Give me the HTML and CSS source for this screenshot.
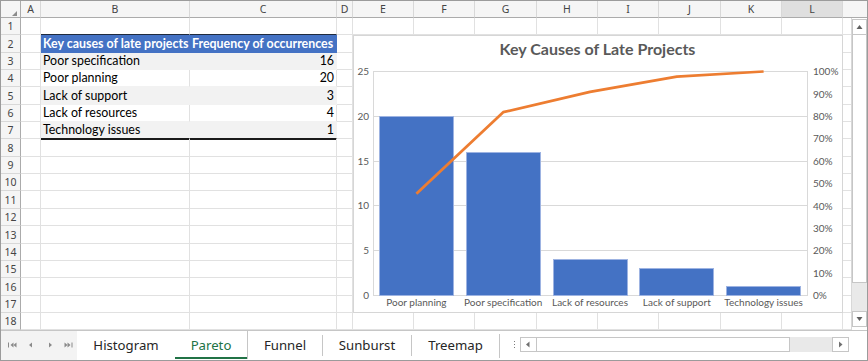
FILE: index.html
```html
<!DOCTYPE html>
<html>
<head>
<meta charset="utf-8">
<link rel="stylesheet" href="styles.css">
</head>
<body>
<div class="app">
  <div class="main">
    <div class="grid">
      <div class="chart">
        <svg width="488" height="276" viewBox="0 0 488 276">
          <text class="title" x="243.5" y="18.5" text-anchor="middle">Key Causes of Late Projects</text>
          <g stroke="#d9d9d9" stroke-width="1" fill="none">
            <line x1="19" y1="80.5" x2="454" y2="80.5"/>
            <line x1="19" y1="125.5" x2="454" y2="125.5"/>
            <line x1="19" y1="169.5" x2="454" y2="169.5"/>
            <line x1="19" y1="214.5" x2="454" y2="214.5"/>
            <rect x="19.5" y="35.5" width="434" height="224"/>
          </g>
          <g fill="#4472c4" stroke="#9db3e2" stroke-width="1">
            <rect x="25.5" y="80.5" width="74" height="179"/>
            <rect x="112.5" y="116.5" width="74" height="143"/>
            <rect x="199.5" y="223.5" width="74" height="36"/>
            <rect x="285.5" y="232.5" width="74" height="27"/>
            <rect x="372.5" y="250.5" width="74" height="9"/>
          </g>
          <polyline points="62.4,157.7 149.2,76.2 236,55.9 322.8,40.6 409.6,35.5" fill="none" stroke="#ed7d31" stroke-width="2.75" stroke-linejoin="round"/>
          <g class="ax" text-anchor="end">
            <text x="15" y="263">0</text>
            <text x="15" y="218">5</text>
            <text x="15" y="173">10</text>
            <text x="15" y="129">15</text>
            <text x="15" y="84">20</text>
            <text x="15" y="39">25</text>
          </g>
          <g class="ax" text-anchor="start">
            <text x="459" y="263.1">0%</text>
            <text x="459" y="240.7">10%</text>
            <text x="459" y="218.3">20%</text>
            <text x="459" y="195.9">30%</text>
            <text x="459" y="173.5">40%</text>
            <text x="459" y="151.1">50%</text>
            <text x="459" y="128.7">60%</text>
            <text x="459" y="106.3">70%</text>
            <text x="459" y="83.9">80%</text>
            <text x="459" y="61.5">90%</text>
            <text x="459" y="39.1">100%</text>
          </g>
          <g class="ax" text-anchor="middle">
            <text x="62.4" y="269.5">Poor planning</text>
            <text x="149.2" y="269.5">Poor specification</text>
            <text x="236" y="269.5">Lack of resources</text>
            <text x="322.8" y="269.5">Lack of support</text>
            <text x="409.6" y="269.5">Technology issues</text>
          </g>
        </svg>
      </div>

      <div class="corner"><svg width="19" height="16" viewBox="0 0 19 16"><polygon points="16,10 16,15 11,15" fill="#8c8c8c"/></svg></div>
      <div class="ch">A</div><div class="ch">B</div><div class="ch">C</div><div class="ch">D</div><div class="ch">E</div><div class="ch">F</div><div class="ch">G</div><div class="ch">H</div><div class="ch">I</div><div class="ch">J</div><div class="ch">K</div><div class="ch hl">L</div><div class="ch last"></div>

      <div class="rh">1</div><div class="c"></div><div class="c top"></div><div class="c top"></div><div class="c"></div><div class="c"></div><div class="c"></div><div class="c"></div><div class="c"></div><div class="c"></div><div class="c"></div><div class="c"></div><div class="c"></div><div class="c m"></div>

      <div class="rh">2</div><div class="c"></div><div class="c th">Key causes of late projects</div><div class="c th">Frequency of occurrences</div><div class="c"></div><div class="c m"></div>
      <div class="rh">3</div><div class="c"></div><div class="c band">Poor specification</div><div class="c band num">16</div><div class="c"></div><div class="c m"></div>
      <div class="rh">4</div><div class="c"></div><div class="c plain">Poor planning</div><div class="c plain num">20</div><div class="c"></div><div class="c m"></div>
      <div class="rh">5</div><div class="c"></div><div class="c band">Lack of support</div><div class="c band num">3</div><div class="c"></div><div class="c m"></div>
      <div class="rh">6</div><div class="c"></div><div class="c plain">Lack of resources</div><div class="c plain num">4</div><div class="c"></div><div class="c m"></div>
      <div class="rh">7</div><div class="c"></div><div class="c band lastrow">Technology issues</div><div class="c band num lastrow">1</div><div class="c"></div><div class="c m"></div>
      <div class="rh">8</div><div class="c"></div><div class="c"></div><div class="c"></div><div class="c"></div><div class="c m"></div>
      <div class="rh">9</div><div class="c"></div><div class="c"></div><div class="c"></div><div class="c"></div><div class="c m"></div>
      <div class="rh">10</div><div class="c"></div><div class="c"></div><div class="c"></div><div class="c"></div><div class="c m"></div>
      <div class="rh">11</div><div class="c"></div><div class="c"></div><div class="c"></div><div class="c"></div><div class="c m"></div>
      <div class="rh">12</div><div class="c"></div><div class="c"></div><div class="c"></div><div class="c"></div><div class="c m"></div>
      <div class="rh">13</div><div class="c"></div><div class="c"></div><div class="c"></div><div class="c"></div><div class="c m"></div>
      <div class="rh">14</div><div class="c"></div><div class="c"></div><div class="c"></div><div class="c"></div><div class="c m"></div>
      <div class="rh">15</div><div class="c"></div><div class="c"></div><div class="c"></div><div class="c"></div><div class="c m"></div>
      <div class="rh">16</div><div class="c"></div><div class="c"></div><div class="c"></div><div class="c"></div><div class="c m"></div>
      <div class="rh">17</div><div class="c"></div><div class="c"></div><div class="c"></div><div class="c"></div><div class="c m"></div>

      <div class="rh">18</div><div class="c"></div><div class="c"></div><div class="c"></div><div class="c"></div><div class="c"></div><div class="c"></div><div class="c"></div><div class="c"></div><div class="c"></div><div class="c"></div><div class="c"></div><div class="c"></div><div class="c m"></div>
    </div>

    <div class="vscroll">
      <div class="vs-head"></div>
      <div class="vs-body">
        <div class="sbtn"><svg width="13" height="14" viewBox="0 0 13 14"><polygon points="3.5,9 9.5,9 6.5,5" fill="#606060"/></svg></div>
        <div class="vthumb"></div>
        <div class="vtrack"></div>
        <div class="sbtn"><svg width="13" height="14" viewBox="0 0 13 14"><polygon points="3.5,5 9.5,5 6.5,9" fill="#606060"/></svg></div>
      </div>
    </div>
  </div>

  <div class="tabbar">
    <div class="nav">
      <svg width="76" height="29" viewBox="0 0 76 29">
        <g fill="#8a8a8a">
          <rect x="7" y="11.5" width="1" height="5"/>
          <polygon points="12.5,11.5 12.5,16.5 9.5,14"/>
          <polygon points="15.5,11.5 15.5,16.5 12.5,14"/>
          <polygon points="31,11.5 31,16.5 28,14"/>
          <polygon points="48,11.5 48,16.5 51,14"/>
          <polygon points="63.5,11.5 63.5,16.5 66.5,14"/>
          <polygon points="66.5,11.5 66.5,16.5 69.5,14"/>
          <rect x="70.5" y="11.5" width="1" height="5"/>
        </g>
      </svg>
    </div>
    <div class="tab w-hist">Histogram</div>
    <div class="tab active w-par">Pareto</div>
    <div class="tab w-fun">Funnel</div>
    <span class="sep"></span>
    <div class="tab w-sun">Sunburst</div>
    <span class="sep"></span>
    <div class="tab w-tree">Treemap</div>
    <span class="sep tall"></span>
    <div class="dots"><svg width="20" height="29" viewBox="0 0 20 29"><g fill="#7a7a7a"><rect x="14" y="10" width="1" height="1"/><rect x="14" y="13" width="1" height="1"/><rect x="14" y="16" width="1" height="1"/></g></svg></div>
    <div class="hscroll">
      <div class="hbtn"><svg width="15" height="13" viewBox="0 0 15 13"><polygon points="8.5,3.5 8.5,9.5 5,6.5" fill="#707070"/></svg></div>
      <div class="hthumb"></div>
      <div class="htrack"></div>
      <div class="hbtn"><svg width="15" height="13" viewBox="0 0 15 13"><polygon points="6,3.5 6,9.5 9.5,6.5" fill="#707070"/></svg></div>
    </div>
  </div>
</div>
</body>
</html>
```

FILE: styles.css
```css
* { box-sizing: border-box; margin: 0; padding: 0; }
html, body { width: 868px; height: 361px; overflow: hidden; background: #fff; }
body { font-family: Lato, "Liberation Sans", sans-serif; color: #000; }

.app {
  width: 868px;
  height: 361px;
  border: 1px solid #9b9b9b;
  display: flex;
  flex-direction: column;
  background: #fff;
}

.main { display: flex; height: 329px; }

.grid {
  width: 850px;
  display: grid;
  grid-template-columns: 20px 20px 149px 147px 16px 61px 61px 62px 61px 61px 62px 61px 61px 8px;
  grid-template-rows: 17px 17px 18px 17px 17px 18px 17px 17px 18px 17px 17px 18px 17px 18px 17px 17px 18px 17px 17px;
}

.corner {
  background: #f5f5f5;
  border-right: 1px solid #ababab;
  border-bottom: 1px solid #ababab;
}
.corner svg { display: block; }

.ch, .rh {
  background: #f5f5f5;
  font-family: "Noto Sans", "DejaVu Sans", sans-serif;
  font-size: 10.5px;
  color: #444;
  display: flex;
  align-items: center;
  justify-content: center;
}
.ch { border-right: 1px solid #d8d8d8; border-bottom: 1px solid #ababab; }
.ch.hl { background: #dfdfdf; }
.ch.last { border-right: none; }
.rh { border-right: 1px solid #ababab; border-bottom: 1px solid #d8d8d8; }

.c {
  border-right: 1px solid #e1e1e1;
  border-bottom: 1px solid #e1e1e1;
  display: flex;
  align-items: center;
  padding: 1px 2px 0 2px;
  font-size: 12.4px;
  line-height: 1;
  white-space: nowrap;
  overflow: hidden;
}
.c.m { border-right: none; }
.c.top { border-bottom-color: #1f2a3d; }
.c.th {
  background: #4472c4;
  border-color: #4472c4;
  color: #fff;
  font-weight: 700;
}
.c.band { background: #f2f2f2; border-color: #f2f2f2; }
.c.plain { border-bottom-color: #f2f2f2; }
.c.num { justify-content: flex-end; }
.c.lastrow { border-bottom: 1px solid #1a1a1a; box-shadow: 0 1px 0 #1a1a1a; }

.chart {
  grid-column: 6 / 14;
  grid-row: 3 / 19;
  border: 1px solid #d6d6d6;
  background: #fff;
  z-index: 1;
}
.chart svg { display: block; }
.chart .title { font-family: Lato, sans-serif; font-weight: 700; font-size: 16px; fill: #595959; }
.chart .ax { font-family: Lato, sans-serif; font-size: 10px; fill: #595959; }

.vscroll { width: 16px; display: flex; flex-direction: column; }
.vs-head { height: 17px; background: #f5f5f5; border-bottom: 1px solid #ababab; }
.vs-body {
  flex: 1;
  border-left: 1px solid #d8d8d8;
  padding-top: 1px;
  display: flex;
  flex-direction: column;
  background: #fff;
}
.sbtn {
  width: 15px;
  height: 16px;
  border: 1px solid #c6c6c6;
  background: #fff;
}
.sbtn svg { display: block; }
.vthumb { width: 15px; height: 248px; border: 1px solid #c6c6c6; border-top: none; background: #fff; }
.vtrack { width: 15px; height: 28px; background: #e9e9e9; }

.tabbar {
  height: 30px;
  border-top: 1px solid #c6c6c6;
  display: flex;
  align-items: stretch;
  font-family: "Noto Sans", "DejaVu Sans", sans-serif;
}
.nav { width: 76px; background: #f3f3f3; }
.nav svg { display: block; }
.tab {
  display: flex;
  align-items: center;
  justify-content: center;
  font-size: 13.2px;
  color: #262626;
  margin-bottom: 1px;
}
.w-hist { width: 98px; }
.w-par { width: 73px; }
.w-fun { width: 74px; }
.w-sun { width: 88px; }
.w-tree { width: 87px; }
.tab.active {
  color: #217346;
  border-right: 1px solid #c6c6c6;
  box-shadow: inset 0 -2px 0 #217346;
}
.sep { width: 1px; background: #c6c6c6; align-self: center; height: 21px; }
.sep.tall { height: 24px; }
.dots { width: 20px; }
.dots svg { display: block; }

.hscroll { display: flex; align-items: flex-start; padding-top: 6px; }
.hbtn { width: 17px; height: 15px; border: 1px solid #c6c6c6; background: #fff; }
.hbtn svg { display: block; }
.hthumb { width: 253px; height: 15px; border: 1px solid #c6c6c6; border-left: none; background: #fff; }
.htrack { width: 42px; height: 15px; background: #e9e9e9; }
```
